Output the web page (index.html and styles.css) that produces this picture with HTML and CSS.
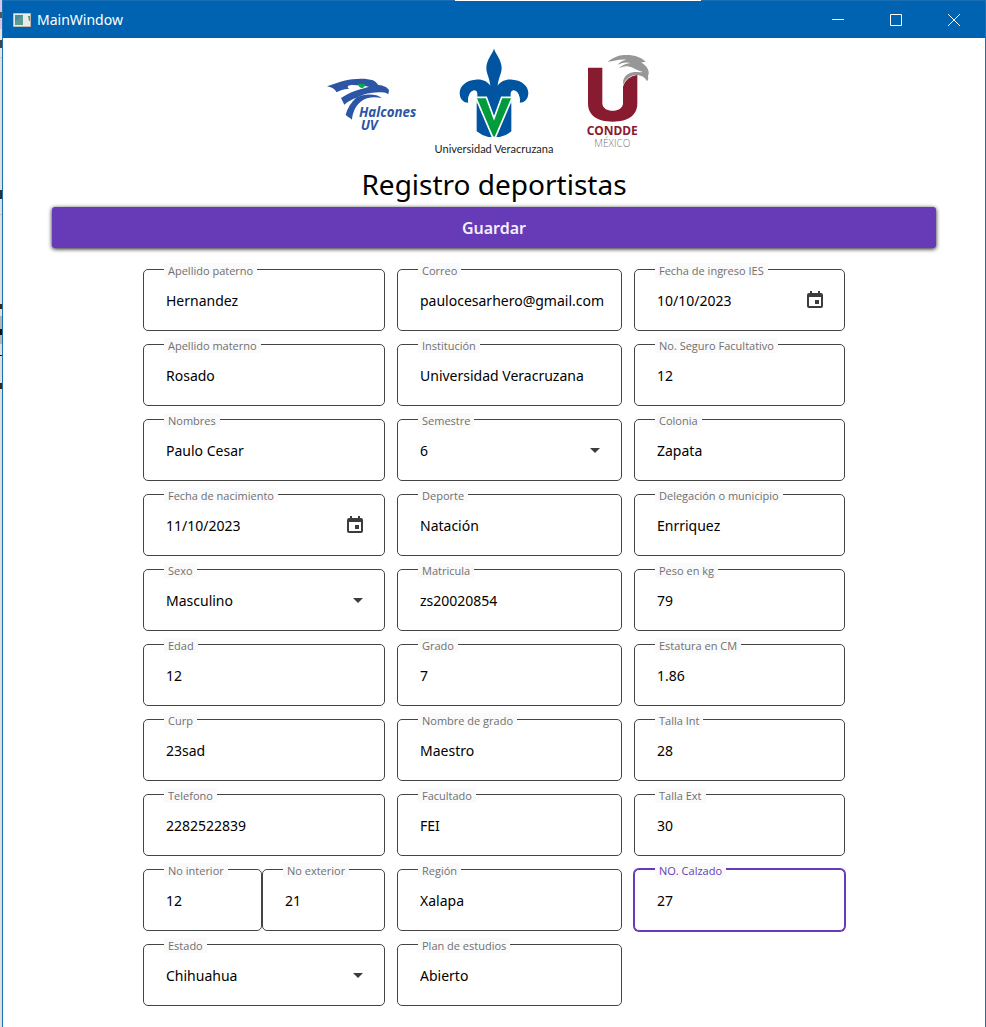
FILE: index.html
```html
<!DOCTYPE html>
<html lang="es">
<head>
<meta charset="utf-8">
<meta name="viewport" content="width=device-width, initial-scale=1">
<title>MainWindow</title>
<link rel="stylesheet" href="styles.css">
</head>
<body>
<svg class="defs" aria-hidden="true">
  <symbol id="calendar" viewBox="0 0 16 18"><path fill="#3c3c3c" fill-rule="evenodd" d="M3 0h2v2h6V0h2v2h1q2 0 2 2v11q0 2-2 2H2q-2 0-2-2V4q0-2 2-2h1zM2 6v9h12V6zM8 9h4v4H8z"/></symbol>
  <symbol id="arrow" viewBox="0 0 10 5"><path fill="#3c3c3c" d="M0 0h10L5 5z"/></symbol>
</svg>
<div class="window">
  <header class="titlebar">
    <svg class="app-icon" width="18" height="14" viewBox="0 0 18 14" aria-hidden="true"><path fill="#e9eceb" stroke="#c4b8a8" d="M.5.5h17v13H.5z"/><path fill="#5a9d90" d="M2 2h8v10H2z"/><path fill="#4a8c9d" d="M2 2h8L2 9z"/><path fill="#4f9a7e" d="M15 3h2v5h-1z"/></svg>
    <span class="title">MainWindow</span>
    <div class="controls">
      <button type="button" aria-label="Minimizar"><svg width="12" height="12" viewBox="0 0 12 12"><path d="M0 5.5h12"/></svg></button>
      <button type="button" aria-label="Maximizar"><svg width="12" height="12" viewBox="0 0 12 12"><path d="M.5.5h11v11H.5z"/></svg></button>
      <button type="button" aria-label="Cerrar"><svg width="12" height="12" viewBox="0 0 12 12"><path d="M0 0l12 12M12 0L0 12"/></svg></button>
    </div>
  </header>
  <main>
    <div class="logos">
      <svg class="logo-halcones" width="92" height="56" viewBox="24 114 276 168" role="img" aria-label="Halcones UV">
        <g fill="#2c56a5">
          <path d="M24 139C50 132 69 121 100 118C122 115 148 116 162 121C170 125 174 130 178 135C194 136 207 143 210 151L208 163C199 157 192 157 180 157C151 158 130 164 116 172C99 178 88 184 76 194L66 174C89 160 107 152 126 147C136 144 144 142 150 140C130 137 104 134 93 136C85 138 84 142 90 147C76 146 64 151 53 157C48 148 40 142 24 139Z"/>
          <path d="M113 172C132 162 170 159 189 174C163 169 141 172 127 184C109 198 101 218 99 239C92 232 86 231 80 224C85 206 96 187 113 172Z"/>
        </g>
        <path fill="#0aa653" d="M117 132Q128 130 140 133Q137 144 128 144Q119 142 117 132Z"/>
        <g class="halcones-text"><text x="120" y="230">Halcones</text><text x="125" y="271">UV</text></g>
      </svg>
      <div class="logo-uv">
        <svg width="70" height="90" viewBox="104 24 210 270" role="img" aria-label="Flor de lis">
          <path fill="#0054a0" d="M209 26C214 42 232 60 232 84C232 101 222 114 220 137C230 122 247 116 265 119C292 121 311 137 312 158C312 178 300 188 286 188C289 166 278 151 265 152C255 153 260 174 261 190V274Q247 286 226 291H192Q171 286 157 274V190C158 174 163 153 153 152C140 151 129 166 132 188C118 188 106 178 106 158C107 137 126 121 153 119C171 116 188 122 198 137C196 114 186 101 186 84C186 60 204 42 209 26Z"/>
          <path fill="#fff" d="M132 188C130 165 139 151 151 151C159 153 158 163 156 172V193Q144 184 132 188ZM286 188C288 165 279 151 267 151C259 153 260 163 262 172V193Q274 184 286 188Z"/>
          <path fill="#009b3a" stroke="#fff" stroke-width="5" d="M154 172H186L209 235L232 172H264L213 292H205Z"/>
        </svg>
        <span>Universidad Veracruzana</span>
      </div>
      <svg class="logo-condde" width="64" height="96" viewBox="52 40 192 288" role="img" aria-label="CONDDE México">
        <path fill="#891b31" d="M55 81H98V188C98 218 160 218 160 188V138C166 119 181 106 203 103V188C203 224 176 243 129 243C82 243 55 224 55 188Z"/>
        <path fill="#979797" d="M114 63C130 52 145 43 164 43C194 42 218 50 229 65C224 63 219 64 215 66C234 76 242 94 235 105Q238 113 232 122C226 107 209 101 195 103C179 106 167 118 161 132C157 112 172 98 190 95C201 93 211 96 219 93C201 91 191 79 174 77Q162 76 149 82C157 72 171 69 183 67Q165 62 145 72C152 61 162 59 170 57C150 54 134 62 114 63Z"/>
        <g text-anchor="middle"><text class="condde-name" x="128" y="282">CONDDE</text><text class="condde-country" x="128" y="318">MÉXICO</text></g>
      </svg>
    </div>
    <h1>Registro deportistas</h1>
    <button class="save" type="submit" form="registro">Guardar</button>
    <form id="registro">
      <div class="column">
        <div class="field"><label for="paterno">Apellido paterno</label><input id="paterno" value="Hernandez"></div>
        <div class="field"><label for="materno">Apellido materno</label><input id="materno" value="Rosado"></div>
        <div class="field"><label for="nombres">Nombres</label><input id="nombres" value="Paulo Cesar"></div>
        <div class="field"><label for="nacimiento">Fecha de nacimiento</label><input id="nacimiento" value="11/10/2023"><button class="pick" type="button" aria-label="Elegir fecha de nacimiento"><svg width="16" height="18"><use href="#calendar"/></svg></button></div>
        <div class="field"><label for="sexo">Sexo</label><select id="sexo"><option>Masculino</option></select><svg class="arrow" width="10" height="5"><use href="#arrow"/></svg></div>
        <div class="field"><label for="edad">Edad</label><input id="edad" value="12"></div>
        <div class="field"><label for="curp">Curp</label><input id="curp" value="23sad"></div>
        <div class="field"><label for="telefono">Telefono</label><input id="telefono" value="2282522839"></div>
        <div class="pair">
          <div class="field"><label for="interior">No interior</label><input id="interior" value="12"></div>
          <div class="field"><label for="exterior">No exterior</label><input id="exterior" value="21"></div>
        </div>
        <div class="field"><label for="estado">Estado</label><select id="estado"><option>Chihuahua</option></select><svg class="arrow" width="10" height="5"><use href="#arrow"/></svg></div>
      </div>
      <div class="column">
        <div class="field"><label for="correo">Correo</label><input id="correo" value="paulocesarhero@gmail.com"></div>
        <div class="field"><label for="institucion">Institución</label><input id="institucion" value="Universidad Veracruzana"></div>
        <div class="field"><label for="semestre">Semestre</label><select id="semestre"><option>6</option></select><svg class="arrow" width="10" height="5"><use href="#arrow"/></svg></div>
        <div class="field"><label for="deporte">Deporte</label><input id="deporte" value="Natación"></div>
        <div class="field"><label for="matricula">Matricula</label><input id="matricula" value="zs20020854"></div>
        <div class="field"><label for="grado">Grado</label><input id="grado" value="7"></div>
        <div class="field"><label for="nombre-grado">Nombre de grado</label><input id="nombre-grado" value="Maestro"></div>
        <div class="field"><label for="facultado">Facultado</label><input id="facultado" value="FEI"></div>
        <div class="field"><label for="region">Región</label><input id="region" value="Xalapa"></div>
        <div class="field"><label for="plan">Plan de estudios</label><input id="plan" value="Abierto"></div>
      </div>
      <div class="column">
        <div class="field"><label for="ingreso">Fecha de ingreso IES</label><input id="ingreso" value="10/10/2023"><button class="pick" type="button" aria-label="Elegir fecha de ingreso"><svg width="16" height="18"><use href="#calendar"/></svg></button></div>
        <div class="field"><label for="seguro">No. Seguro Facultativo</label><input id="seguro" value="12"></div>
        <div class="field"><label for="colonia">Colonia</label><input id="colonia" value="Zapata"></div>
        <div class="field"><label for="municipio">Delegación o municipio</label><input id="municipio" value="Enrriquez"></div>
        <div class="field"><label for="peso">Peso en kg</label><input id="peso" value="79"></div>
        <div class="field"><label for="estatura">Estatura en CM</label><input id="estatura" value="1.86"></div>
        <div class="field"><label for="talla-int">Talla Int</label><input id="talla-int" value="28"></div>
        <div class="field"><label for="talla-ext">Talla Ext</label><input id="talla-ext" value="30"></div>
        <div class="field active"><label for="calzado">NO. Calzado</label><input id="calzado" value="27"></div>
      </div>
    </form>
  </main>
</div>
</body>
</html>
```
FILE: styles.css
```css
* { box-sizing: border-box; }

body {
  margin: 0;
  padding-left: 2px;
  min-height: 100vh;
  display: flex;
  font-family: "Noto Sans", "Open Sans", sans-serif;
  font-size: 14px;
  color: #000;
  background: linear-gradient(
    #dcc4e8 0 12px, #555 12px 18px, #dcc4e8 18px 29px,
    #e4e4e4 29px 40px, #444 40px 48px, #e4e4e4 48px 57px,
    #c8c8c8 57px 58px, #e0e0e0 58px 190px, #26323c 190px 199px,
    #e0e0e0 199px 214px, #c0c0c0 214px 215px, #e0e0e0 215px 304px,
    #3a2a10 304px 309px, #e0e0e0 309px 316px, #b4b4b4 316px 329px,
    #111 329px 335px, #b4b4b4 335px 344px, #e0e0e0 344px 355px,
    #111 355px 356px, #e0e0e0 356px 383px, #3a2a10 383px 389px,
    #e0e0e0 389px);
}

.defs { position: absolute; width: 0; height: 0; }

.window {
  flex: 1;
  min-width: 0;
  border: solid #1a72b4;
  border-width: 0 1px;
  background: #fff;
}

.titlebar {
  height: 38px;
  display: flex;
  align-items: center;
  padding: 0 2px 0 10px;
  color: #fff;
  border-top: 1px solid #1a6fb5;
  border-image: linear-gradient(90deg, #1a6fb5 46%, #fff 46% 71%, #1a6fb5 71%) 1;
  background: #0063b1;
}
.title { margin-left: 6px; }
.controls { margin-left: auto; display: flex; }
.controls button {
  width: 58px;
  height: 36px;
  padding: 0;
  border: 0;
  background: none;
  display: grid;
  place-items: center;
}
.controls path { fill: none; stroke: #fff; stroke-width: 1; }

main { display: flex; flex-direction: column; }

.logos {
  height: 126px;
  padding: 10px 10px 0 0;
  display: flex;
  justify-content: center;
  align-items: flex-start;
}
.logo-halcones { margin-top: 30px; }
.halcones-text { font: italic 700 40px "Open Sans", sans-serif; fill: #2c56a5; }
.logo-uv {
  margin: 0 34px 0 16px;
  display: flex;
  flex-direction: column;
  align-items: center;
  font: 11px/16px Lato, sans-serif;
  color: #222;
}
.logo-uv span { margin-top: 3px; white-space: nowrap; }
.logo-condde { margin-top: 6px; }
.condde-name { font: 700 36px "Noto Sans", sans-serif; fill: #891b31; }
.condde-country { font: 300 30px "Open Sans", sans-serif; fill: #777; }

h1 {
  margin: 0;
  font-size: 28px;
  font-weight: 400;
  line-height: 40px;
  text-align: center;
}

.save {
  height: 41px;
  margin: 3px 5% 0;
  border: 0;
  border-radius: 3px;
  background: #673ab7;
  color: #f3effa;
  font: 600 16px "Noto Sans", "Open Sans", sans-serif;
  box-shadow: 0 1px 4px rgba(0, 0, 0, .9);
}

form {
  width: 100%;
  max-width: 702px;
  margin: 21px auto;
  display: grid;
  grid-template-columns: minmax(0, 242fr) minmax(0, 225fr) minmax(0, 211fr);
  gap: 12px;
}
.column { display: flex; flex-direction: column; gap: 13px; }
.pair { display: grid; grid-template-columns: minmax(0, 119fr) minmax(0, 123fr); }

.field {
  position: relative;
  height: 62px;
  border: 1px solid #444;
  border-radius: 5px;
  background: #fff;
  display: flex;
}
.field label {
  position: absolute;
  top: -7px;
  left: 20px;
  padding: 0 4px;
  border-radius: 2px;
  background: #fafafa;
  color: #707070;
  font: 11px/15px "Open Sans", "Noto Sans", sans-serif;
  white-space: nowrap;
}
.field input,
.field select {
  flex: 1;
  min-width: 0;
  padding: 0 12px 0 22px;
  border: 0;
  outline: 0;
  background: none;
  appearance: none;
  color: inherit;
  font: inherit;
}
.pick {
  padding: 0 21px 0 0;
  border: 0;
  background: none;
  display: flex;
  align-items: center;
}
.arrow { align-self: center; margin-right: 21px; pointer-events: none; }

.field.active { border-color: #673ab7; box-shadow: 0 0 0 1px #673ab7; }
.field.active label { color: #673ab7; }
```
